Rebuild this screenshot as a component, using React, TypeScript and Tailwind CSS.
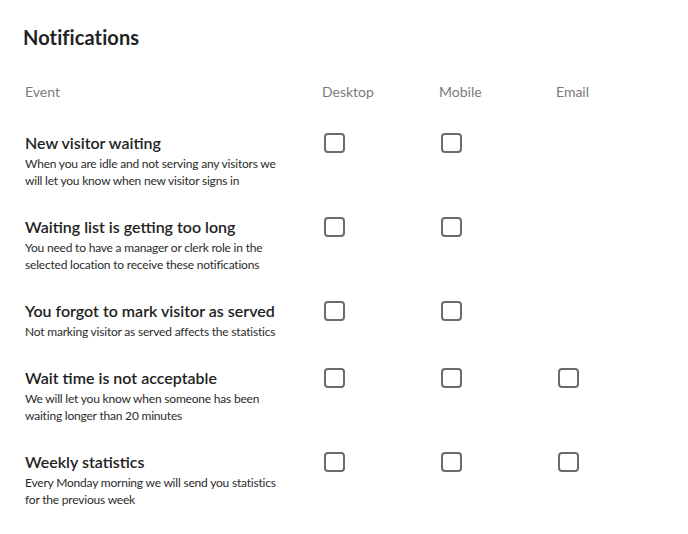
import React from "react";

type Row = {
  title: string;
  desc: string[];
  email: boolean;
};

const rows: Row[] = [
  {
    title: "New visitor waiting",
    desc: ["When you are idle and not serving any visitors we", "will let you know when new visitor signs in"],
    email: false,
  },
  {
    title: "Waiting list is getting too long",
    desc: ["You need to have a manager or clerk role in the", "selected location to receive these notifications"],
    email: false,
  },
  {
    title: "You forgot to mark visitor as served",
    desc: ["Not marking visitor as served affects the statistics"],
    email: false,
  },
  {
    title: "Wait time is not acceptable",
    desc: ["We will let you know when someone has been", "waiting longer than 20 minutes"],
    email: true,
  },
  {
    title: "Weekly statistics",
    desc: ["Every Monday morning we will send you statistics", "for the previous week"],
    email: true,
  },
];

const Box: React.FC = () => (
  <div className="w-[21px] h-[20px] rounded-[4px] border-2 border-[#6b6b6b] bg-white" />
);

const App: React.FC = () => {
  return (
    <div className="w-[688px] h-[534px] bg-white pl-[25px] pt-[24px] font-['Lato','Open_Sans',sans-serif] text-[#222]">
      <h1 className="text-[20px] font-bold leading-[26px] -ml-[2px] tracking-[0.1px]">Notifications</h1>
      <div className="grid grid-cols-[297px_117px_117px_117px] mt-[33px] text-[14px] leading-[18px] text-[#7a7a7a]">
        <div>Event</div>
        <div>Desktop</div>
        <div>Mobile</div>
        <div>Email</div>
      </div>
      <div className="flex flex-col gap-[28px] mt-[32px]">
        {rows.map((r) => (
          <div key={r.title} className="grid grid-cols-[297px_117px_117px_117px]">
            <div>
              <div className="text-[16px] font-semibold leading-[20px] text-[#222]">{r.title}</div>
              <div className="text-[12px] tracking-[-0.2px] leading-[17px] text-[#2b2b2b] mt-[2px]">
                {r.desc.map((d) => (
                  <div key={d}>{d}</div>
                ))}
              </div>
            </div>
            <div className="pl-[2px]">
              <Box />
            </div>
            <div className="pl-[2px]">
              <Box />
            </div>
            <div className="pl-[2px]">{r.email && <Box />}</div>
          </div>
        ))}
      </div>
    </div>
  );
};

export default App;
